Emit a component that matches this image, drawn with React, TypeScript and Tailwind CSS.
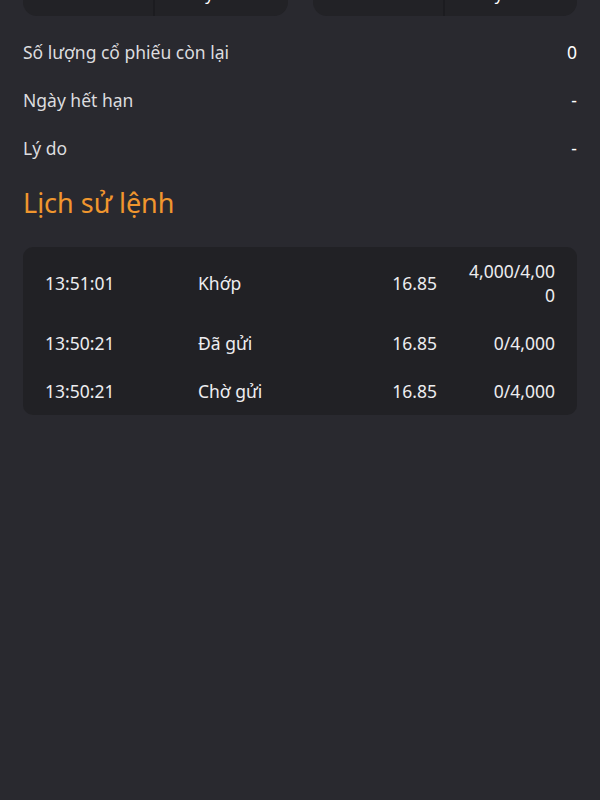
const orders = [
  { time: '13:51:01', status: 'Khớp', price: '16.85', qty: '4,000/4,000' },
  { time: '13:50:21', status: 'Đã gửi', price: '16.85', qty: '0/4,000' },
  { time: '13:50:21', status: 'Chờ gửi', price: '16.85', qty: '0/4,000' },
];

const details = [
  { label: 'Số lượng cổ phiếu còn lại', value: '0' },
  { label: 'Ngày hết hạn', value: '-' },
  { label: 'Lý do', value: '-' },
];

const SplitCard = ({ left, right }: { left: string; right: string }) => (
  <div className="grid grid-cols-2 h-[56px] rounded-[14px] bg-[#222226] overflow-hidden">
    <div className="flex items-end justify-center pb-[22px] text-[16px] leading-6 text-white border-r-2 border-[#1c1c20]">
      {left}
    </div>
    <div className="flex items-end justify-center pb-[10px] pr-[12px] text-[16px] leading-6 text-white">
      {right}
    </div>
  </div>
);

export default function App() {
  return (
    <div
      className="min-h-[800px] bg-[#29292f] overflow-hidden"
      style={{ fontFamily: '"Noto Sans", "Open Sans", sans-serif' }}
    >
      <div className="-mt-[40px] px-[23px]">
        <div className="grid grid-cols-2 gap-[25px]">
          <SplitCard left="Mua" right="Hủy đơn" />
          <SplitCard left="Bán" right="Hủy đơn" />
        </div>

        <div className="mt-[12px]">
          {details.map((d) => (
            <div key={d.label} className="flex justify-between items-center h-[48px] text-[17.5px]">
              <span className="text-[#dcdcdf]">{d.label}</span>
              <span className="text-white">{d.value}</span>
            </div>
          ))}
        </div>

        <h2 className="mt-[13px] text-[27px] leading-9 text-[#f0962e]">Lịch sử lệnh</h2>

        <div className="mt-[26px] rounded-[10px] bg-[#212125] px-[22px]">
          {orders.map((o, i) => (
            <div key={i} className="flex items-center py-3 text-[17.5px] leading-6 text-[#ededf0]">
              <div className="w-[153px]">{o.time}</div>
              <div className="flex-1">{o.status}</div>
              <div className="w-[80px] text-right">{o.price}</div>
              <div className="ml-[28px] w-[90px] text-right break-all">{o.qty}</div>
            </div>
          ))}
        </div>
      </div>
    </div>
  );
}
